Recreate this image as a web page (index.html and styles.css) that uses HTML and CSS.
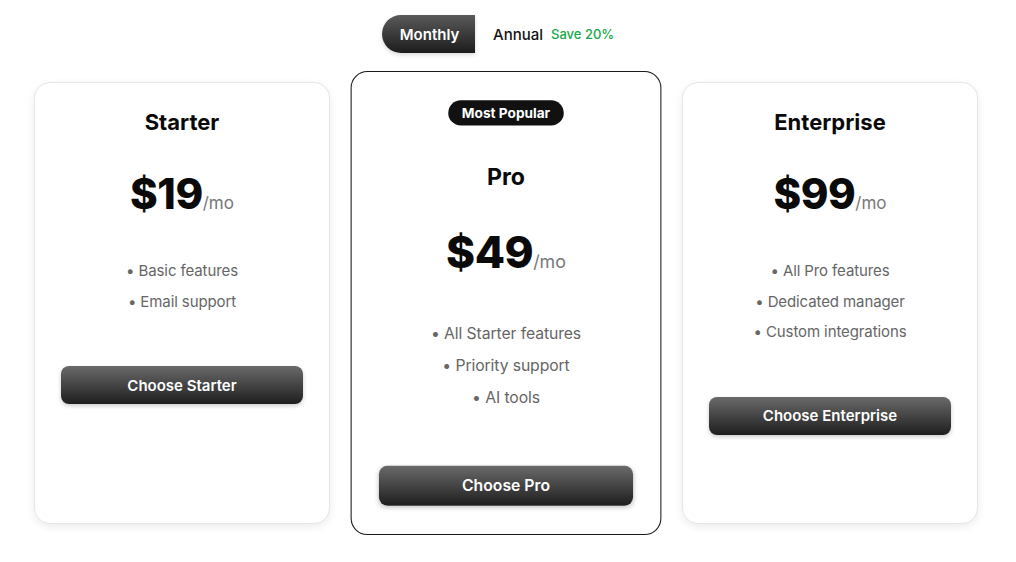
FILE: index.html
```html
<!DOCTYPE html>
<html lang="en">
<head>
<meta charset="utf-8">
<title>Pricing</title>
<link rel="stylesheet" href="styles.css">
</head>
<body>
<div class="page">
  <div class="toggle-row">
    <div class="toggle">
      <button class="toggle-btn active">Monthly</button>
      <button class="toggle-btn">Annual <span class="save">Save 20%</span></button>
    </div>
  </div>
  <div class="cards">
    <div class="card">
      <h2 class="title">Starter</h2>
      <div class="price"><span class="amount">$19</span><span class="per">/mo</span></div>
      <ul class="features">
        <li>• Basic features</li>
        <li>• Email support</li>
      </ul>
      <button class="cta">Choose Starter</button>
    </div>
    <div class="card featured">
      <span class="badge">Most Popular</span>
      <h2 class="title">Pro</h2>
      <div class="price"><span class="amount">$49</span><span class="per">/mo</span></div>
      <ul class="features">
        <li>• All Starter features</li>
        <li>• Priority support</li>
        <li>• AI tools</li>
      </ul>
      <button class="cta">Choose Pro</button>
    </div>
    <div class="card">
      <h2 class="title">Enterprise</h2>
      <div class="price"><span class="amount">$99</span><span class="per">/mo</span></div>
      <ul class="features">
        <li>• All Pro features</li>
        <li>• Dedicated manager</li>
        <li>• Custom integrations</li>
      </ul>
      <button class="cta">Choose Enterprise</button>
    </div>
  </div>
</div>
</body>
</html>
```
FILE: styles.css
```css
* { box-sizing: border-box; }
html, body { margin: 0; padding: 0; background: #fff; }
body {
  font-family: Inter, "Noto Sans", "Liberation Sans", sans-serif;
  color: #111;
}
.page {
  width: 1016px;
  min-height: 562px;
  padding: 15px 38px 40px 34px;
}
.toggle-row {
  display: flex;
  justify-content: center;
}
.toggle {
  display: flex;
  width: 248px;
}
.toggle-btn {
  font-family: inherit;
  border: none;
  background: transparent;
  height: 38px;
  font-size: 15px;
  font-weight: 500;
  color: #111;
  padding: 0 0 0 18px;
  display: flex;
  align-items: center;
  cursor: pointer;
  white-space: nowrap;
}
.toggle-btn.active {
  width: 93px;
  flex: none;
  justify-content: center;
  padding: 0 0 0 2px;
  color: #fff;
  font-weight: 600;
  border-radius: 19px 0 0 19px;
  background: linear-gradient(#5a5a5a, #1c1c1c);
  box-shadow: 0 2px 4px rgba(0,0,0,0.15);
}
.save {
  color: #18a84a;
  font-size: 13px;
  font-weight: 500;
  margin-left: 8px;
}
.cards {
  display: flex;
  gap: 28px;
  margin-top: 29px;
  align-items: stretch;
}
.card {
  width: 296px;
  flex: none;
  display: flex;
  flex-direction: column;
  align-items: center;
  padding: 27px 26px 27px;
  border: 1px solid #e6e6e6;
  border-radius: 16px;
  background: #fff;
  box-shadow: 0 3px 8px rgba(0,0,0,0.08);
}
.card.featured {
  border-color: #1a1a1a;
  box-shadow: none;
  transform: scale(1.05);
}
.badge {
  background: #111;
  color: #fff;
  font-size: 13px;
  font-weight: 700;
  height: 24px;
  line-height: 24px;
  padding: 0 13px;
  border-radius: 12px;
  margin-bottom: 37px;
}
.title {
  margin: 0;
  font-size: 22px;
  line-height: 24px;
  font-weight: 700;
  color: #0a0a0a;
}
.price {
  margin-top: 34px;
  height: 52px;
  display: flex;
  align-items: baseline;
  justify-content: center;
  line-height: 52px;
}
.amount {
  font-size: 42px;
  font-weight: 800;
  color: #0a0a0a;
  letter-spacing: -0.5px;
}
.per {
  font-size: 17px;
  color: #777;
}
.features {
  list-style: none;
  margin: 36px 0 0;
  padding: 0;
  text-align: center;
}
.features li {
  font-size: 15px;
  line-height: 22.5px;
  padding: 4px 0;
  color: #666;
  letter-spacing: -0.1px;
}
.cta {
  margin-top: 49px;
  width: 100%;
  height: 38px;
  border: none;
  border-radius: 8px;
  font-family: inherit;
  font-size: 15px;
  font-weight: 600;
  color: #fff;
  background: linear-gradient(#6a6a6a, #1e1e1e);
  box-shadow: 0 2px 4px rgba(0,0,0,0.2);
  cursor: pointer;
}
```
